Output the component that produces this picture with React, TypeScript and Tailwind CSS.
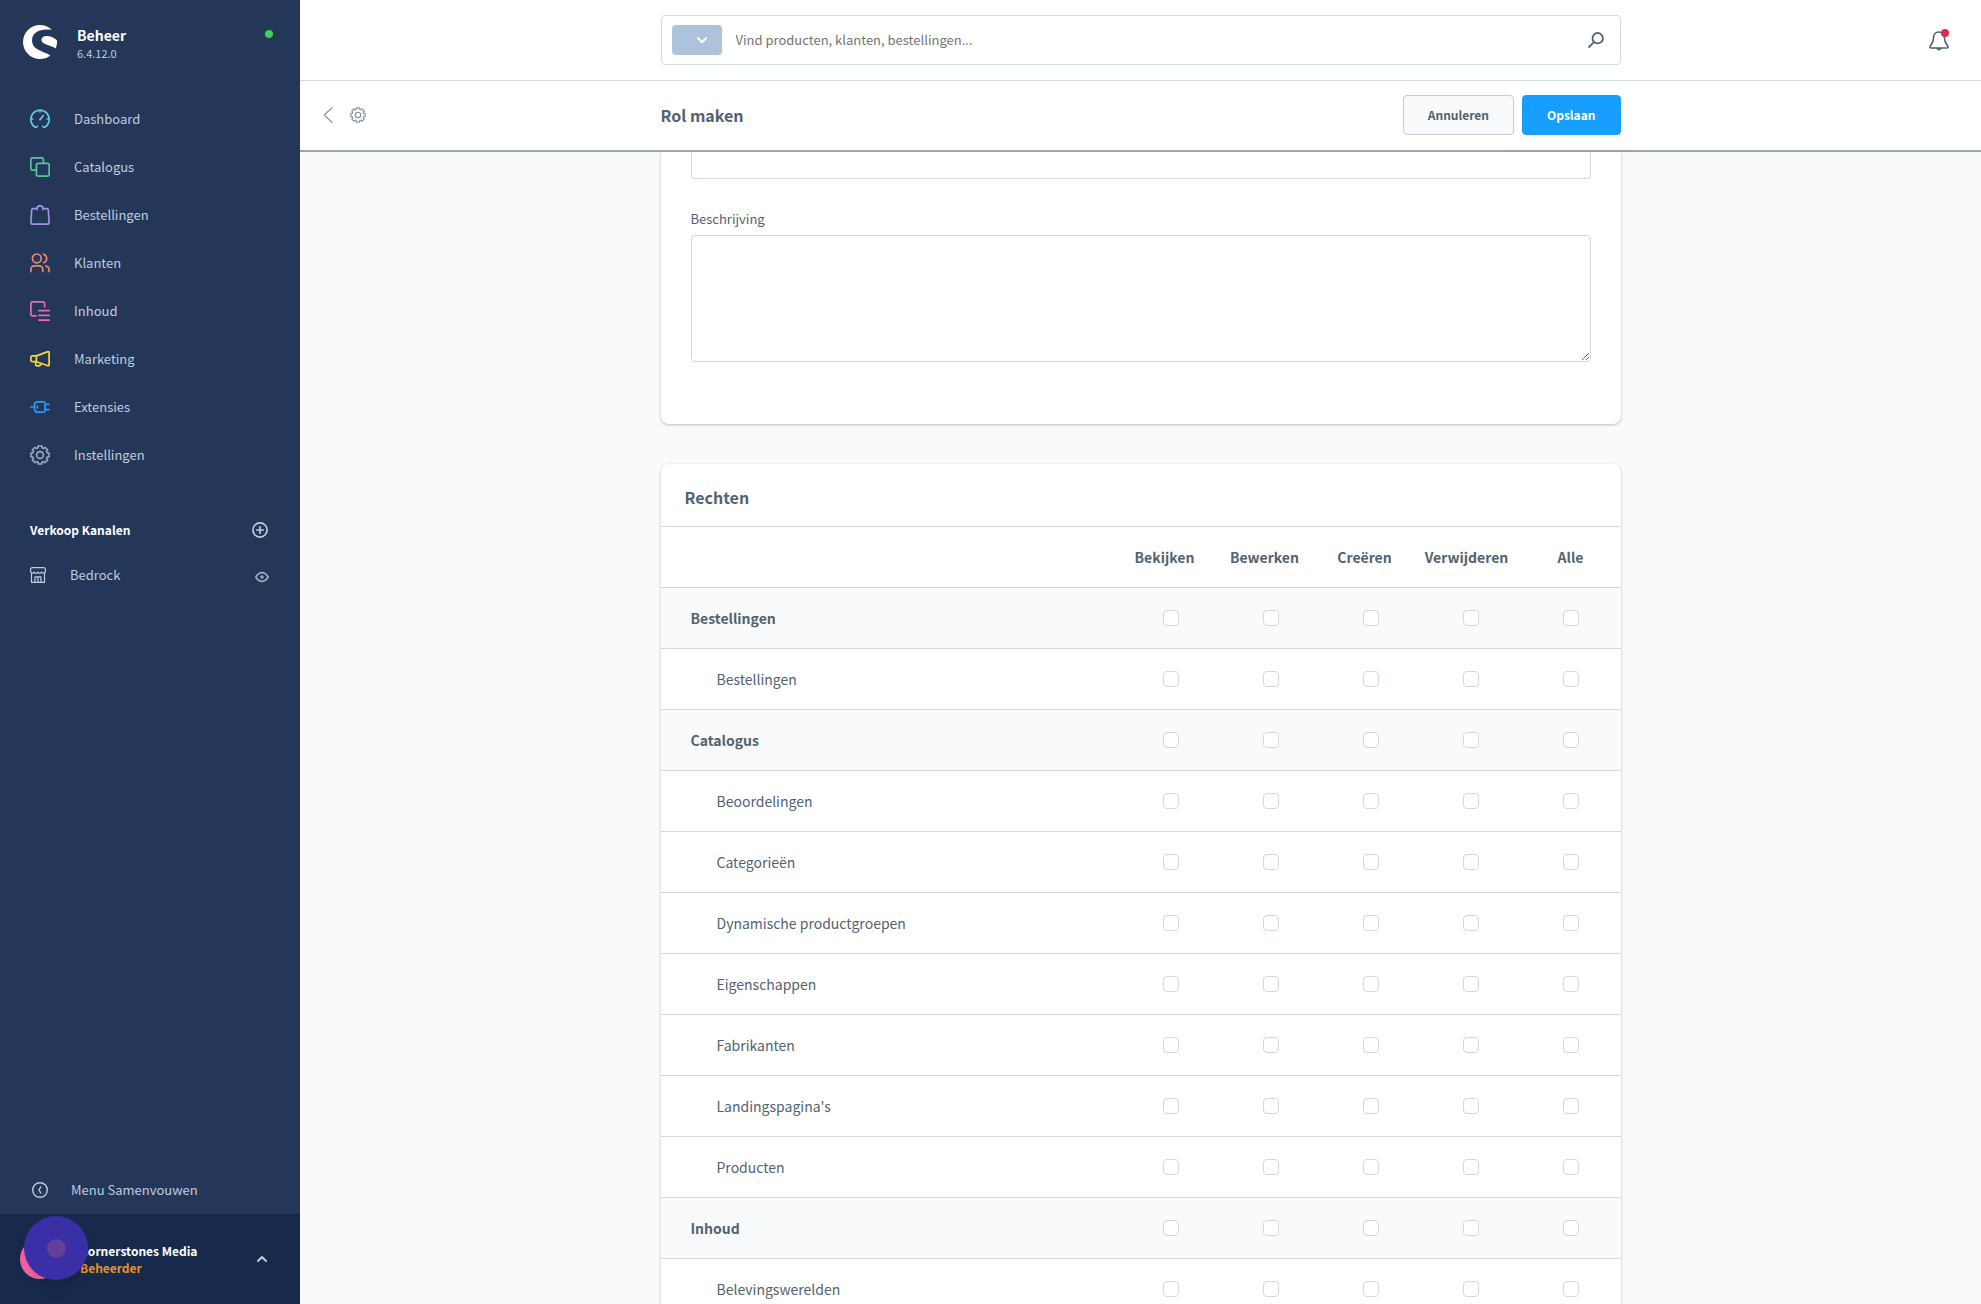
import { useState, type ReactNode } from "react";
import { SiShopware } from "react-icons/si";

// --- Iconos ---
function Svg({ size, box, width = 1.7, children }: { size: number; box: number; width?: number; children: ReactNode }) {
  return (
    <svg
      width={size}
      height={size}
      viewBox={`0 0 ${box} ${box}`}
      fill="none"
      stroke="currentColor"
      strokeWidth={width}
      strokeLinecap="round"
      strokeLinejoin="round"
      className="shrink-0"
      aria-hidden="true"
    >
      {children}
    </svg>
  );
}

const gearPath = () => {
  const points: string[] = [];
  for (let i = 0; i < 8; i++) {
    [[-12, 9.2], [12, 9.2], [15, 7.5], [30, 7.5]].forEach(([deg, r]) => {
      const a = ((i * 45 + deg - 90) * Math.PI) / 180;
      points.push(`${(10 + r * Math.cos(a)).toFixed(2)} ${(10 + r * Math.sin(a)).toFixed(2)}`);
    });
  }
  return `M${points.join("L")}Z`;
};

const Gear = ({ size, width }: { size: number; width: number }) => (
  <Svg size={size} box={20} width={width}>
    <path d={gearPath()} />
    <circle cx="10" cy="10" r="3.4" />
  </Svg>
);

const menu = [
  {
    label: "Dashboard",
    color: "text-[#60c5e6]",
    icon: (
      <Svg size={20} box={20}>
        <path d="M7.2 17.2 6.3 18.2H5.2A9.2 9.2 0 1 1 14.8 18.2H13.7L12.8 17.2M10 1v1.8M1 10h1.8M17.2 10H19M10 10.6l3.300-4" />
      </Svg>
    ),
  },
  {
    label: "Catalogus",
    color: "text-[#57c5a0]",
    icon: (
      <Svg size={20} box={20}>
        <path d="M6.4 13.2H2.6A1.8 1.8 0 0 1 .8 11.4V2.6A1.8 1.8 0 0 1 2.6.8h9A1.8 1.8 0 0 1 13.4 2.6v3.6" />
        <rect x="6.4" y="6.300" width="12.800" height="12.800" rx="1.800" />
      </Svg>
    ),
  },
  {
    label: "Bestellingen",
    color: "text-[#a092e6]",
    icon: (
      <Svg size={20} box={20}>
        <path d="M4.600 3.600H3A1.300 1.300 0 0 0 1.700 4.800L.9 17.600A1.500 1.500 0 0 0 2.400 19.200H17.600A1.500 1.500 0 0 0 19.100 17.600L18.300 4.800A1.300 1.300 0 0 0 17 3.600h-1.600M7 4.600V3.800a3 3 0 0 1 6 0v.8M7 3.600H5.500M13 3.600h1.500" />
      </Svg>
    ),
  },
  {
    label: "Klanten",
    color: "text-[#ee8767]",
    icon: (
      <Svg size={20} box={20}>
        <circle cx="6.800" cy="5.400" r="4.400" />
        <path d="M.9 18.600v-2.200a3.600 3.600 0 0 1 3.600-3.600h4.700a3.600 3.600 0 0 1 3.600 3.600v2.200M13.600 1.200a4.400 4.400 0 0 1 0 8.400M15.700 13a4 4 0 0 1 3.400 3.800v1.800" />
      </Svg>
    ),
  },
  {
    label: "Inhoud",
    color: "text-[#ea6ac0]",
    icon: (
      <Svg size={20} box={20}>
        <path d="M6 14.800H2.700A1.800 1.800 0 0 1 .9 13V2.700A1.800 1.800 0 0 1 2.700.9H12.800A1.800 1.800 0 0 1 14.600 2.700V5.600M9 9.600H19.100M9 14.400H19.100M9 19.100H19.100" />
      </Svg>
    ),
  },
  {
    label: "Marketing",
    color: "text-[#f7d838]",
    icon: (
      <Svg size={20} box={20}>
        <path d="M6.400 6.900H2.300A1.400 1.400 0 0 0 .9 8.300v3a1.400 1.400 0 0 0 1.400 1.400h4.100ZM6.400 6.900 18 2.600A.9.900 0 0 1 19.100 3.400V16a.9.900 0 0 1-1.100.8L6.400 12.700M5.600 12.900v2.200a1.800 1.800 0 0 0 1.800 1.800h1.400a1.800 1.800 0 0 0 1.800-1.800v-.8" />
      </Svg>
    ),
  },
  {
    label: "Extensies",
    color: "text-[#269bf5]",
    icon: (
      <Svg size={20} box={20}>
        <path d="M.9 10H4.600M6.400 4.800H13.400A1.600 1.600 0 0 1 15 6.400V13.600A1.600 1.600 0 0 1 13.400 15.200H6.400L4.600 13.400V6.600ZM15 7.400h4M15 12.600h4M7.400 9.200v1.600" />
      </Svg>
    ),
  },
  { label: "Instellingen", color: "text-[#9aa9c4]", icon: <Gear size={20} width={1.6} /> },
];

// --- Tabla de derechos ---
const columns = [
  { label: "Bekijken", pad: "pr-3" },
  { label: "Bewerken", pad: "pr-3" },
  { label: "Creëren", pad: "pr-3" },
  { label: "Verwijderen", pad: "pr-2" },
  { label: "Alle", pad: "" },
];

const rows = [
  { label: "Bestellingen", group: true },
  { label: "Bestellingen", group: false },
  { label: "Catalogus", group: true },
  { label: "Beoordelingen", group: false },
  { label: "Categorieën", group: false },
  { label: "Dynamische productgroepen", group: false },
  { label: "Eigenschappen", group: false },
  { label: "Fabrikanten", group: false },
  { label: "Landingspagina's", group: false },
  { label: "Producten", group: false },
  { label: "Inhoud", group: true },
  { label: "Belevingswerelden", group: false },
];

function Sidebar() {
  return (
    <aside className="flex w-[300px] shrink-0 flex-col bg-[#243758] text-[#bfcbe0]">
      <div className="flex items-start px-[23px] pt-[25px]">
        <SiShopware className="size-[34px] text-white" aria-hidden="true" />
        <div className="ml-5 flex-1">
          <div className="text-sm leading-5 font-semibold text-white">Beheer</div>
          <div className="text-[11px] leading-4">6.4.12.0</div>
        </div>
        <span className="mt-[5px] mr-1 size-2 rounded-full bg-[#41cf5a]" />
      </div>

      <nav className="mt-[34px]">
        {menu.map(item => (
          <a key={item.label} href="#" className="flex h-12 items-center gap-6 px-[30px] text-[13px]">
            <span className={item.color}>{item.icon}</span>
            {item.label}
          </a>
        ))}
      </nav>

      <div className="mt-[41px] flex items-center justify-between pr-8 pl-[30px]">
        <h2 className="text-xs leading-5 font-semibold text-white">Verkoop Kanalen</h2>
        <button type="button" aria-label="Verkoopkanaal toevoegen">
          <Svg size={16} box={16}>
            <circle cx="8" cy="8" r="7.100" />
            <path d="M8 4.800v6.400M4.800 8h6.400" />
          </Svg>
        </button>
      </div>
      <div className="mt-[25px] flex items-center pr-[31px] pl-[30px]">
        <Svg size={16} box={16} width={1.2}>
          <path d="M1.500 6.500v8.900h13V6.500M5 15.400V9.800h6v5.600M8 9.800v5.600M2.400.6h11.200a1.800 1.800 0 0 1 1.800 1.800v2a1.900 1.900 0 0 1-3.700.5 1.900 1.900 0 0 1-3.700 0 1.900 1.900 0 0 1-3.700 0A1.900 1.900 0 0 1 .6 4.400v-2A1.800 1.800 0 0 1 2.400.6Z" />
        </Svg>
        <a href="#" className="ml-6 flex-1 text-[13px] leading-5">Bedrock</a>
        <button type="button" aria-label="Bekijk Bedrock" className="pt-1 text-[#9aa9c4]">
          <Svg size={14} box={14} width={1.6}>
            <path d="M.8 7C2.600 4 4.600 2.600 7 2.600S11.400 4 13.200 7C11.400 10 9.400 11.400 7 11.400S2.600 10 .8 7Z" />
            <circle cx="7" cy="7" r="1" />
          </Svg>
        </button>
      </div>

      <button type="button" className="mt-auto flex h-12 items-center gap-[23px] px-8 text-[13px]">
        <Svg size={16} box={16} width={1.4}>
          <circle cx="8" cy="8" r="7.300" />
          <path d="M8.800 5 6.900 8l1.900 3" />
        </Svg>
        Menu Samenvouwen
      </button>
      <div className="relative flex h-[90px] items-center bg-[#172a4c] pr-8 pl-5">
        <span className="size-10 rounded-full bg-[#fb62a4]" />
        <div className="ml-5 flex-1 text-xs font-semibold">
          <div className="leading-[17px] text-white">Cornerstones Media</div>
          <div className="leading-[17px] text-[#e8912d]">Beheerder</div>
        </div>
        <button type="button" aria-label="Gebruikersmenu">
          <Svg size={12} box={12} width={2}>
            <path d="M2 8l4-4 4 4" />
          </Svg>
        </button>
        <span className="absolute top-0.5 left-6 flex size-16 items-center justify-center rounded-full bg-[#3a2fa6] shadow-lg">
          <span className="size-[19px] rounded-full bg-[#62409a]" />
        </span>
      </div>
    </aside>
  );
}

export default function App() {
  const [checked, setChecked] = useState<Record<string, boolean>>({});
  const [query, setQuery] = useState("");

  const toggle = (key: string) => setChecked({ ...checked, [key]: !checked[key] });

  return (
    <div className="flex h-screen overflow-hidden bg-[#f9fafc] font-['Noto_Sans_CJK_SC',sans-serif] text-[#52636f]">
      <Sidebar />

      <main className="flex min-w-0 flex-1 flex-col">
        <header className="grid h-[81px] shrink-0 grid-cols-[1fr_minmax(0,960px)_1fr] items-center border-b border-[#d1d9e0] bg-white">
          <div className="col-start-2 flex h-[50px] items-center rounded border border-[#d1d9e0] px-2.5">
            <button
              type="button"
              aria-label="Zoektype"
              className="flex h-[30px] w-[50px] items-center justify-end rounded bg-[#adc3db] pr-3.5 text-white"
            >
              <Svg size={12} box={12} width={2}>
                <path d="M1.800 4l4.200 4.200L10.200 4" />
              </Svg>
            </button>
            <input
              type="text"
              aria-label="Zoeken"
              placeholder="Vind producten, klanten, bestellingen..."
              value={query}
              onChange={e => setQuery(e.target.value)}
              className="min-w-0 flex-1 px-3.5 text-[13px] leading-5 outline-none placeholder:text-[#757575]"
            />
            <button type="button" aria-label="Zoek" className="mr-1.5">
              <Svg size={16} box={16} width={1.8}>
                <circle cx="9.700" cy="6.200" r="5.200" />
                <path d="M6 10.200 1 15" />
              </Svg>
            </button>
          </div>
          <button type="button" aria-label="Meldingen" className="relative mt-0.5 mr-8 justify-self-end">
            <Svg size={20} box={20} width={1.6}>
              <path d="M10 1C6.600 1 4.600 3.400 4.600 6.400c0 4.400-1.400 6-3.200 8.400-.8 1.100-.4 2.200.8 2.200h15.600c1.200 0 1.600-1.100.8-2.200-1.800-2.400-3.200-4-3.200-8.400C15.400 3.400 13.400 1 10 1ZM8.400 17.600a1.700 1.700 0 0 0 3.200 0" />
            </Svg>
            <span className="absolute -top-0.5 right-0 size-2 rounded-full bg-[#de294c]" />
          </button>
        </header>

        <div className="grid h-[71px] shrink-0 grid-cols-[1fr_minmax(0,960px)_1fr] items-center border-b-2 border-[#9aa5b0] bg-white pb-0.5">
          <div className="flex items-center gap-3.5 pl-5 text-[#8c99a8]">
            <button type="button" aria-label="Terug">
              <Svg size={16} box={16} width={1.3}>
                <path d="M12 .8 4.200 8l7.800 7.200" />
              </Svg>
            </button>
            <button type="button" aria-label="Instellingen">
              <Gear size={16} width={1.6} />
            </button>
          </div>
          <div className="flex items-center gap-2 text-xs font-semibold">
            <h1 className="flex-1 text-base">Rol maken</h1>
            <button type="button" className="h-10 rounded border border-[#c3ccd5] bg-[#f9fafc] px-6">
              Annuleren
            </button>
            <button type="button" className="h-10 rounded border border-[#189eff] bg-[#189eff] px-6 text-white">
              Opslaan
            </button>
          </div>
        </div>

        <div className="min-h-0 flex-1 overflow-hidden">
          <div className="mx-auto max-w-[960px]">
            <section className="rounded-b-lg bg-white px-[30px] pb-[62px] shadow-[0_1px_3px_rgba(0,0,0,0.25)]">
              <input
                type="text"
                aria-label="Naam"
                className="block h-[27px] w-full rounded-b border border-t-0 border-[#d1d9e0] px-4 outline-none"
              />
              <label htmlFor="description" className="block pt-[30px] pb-1.5 text-[13px] leading-5">
                Beschrijving
              </label>
              <textarea
                id="description"
                className="block h-[127px] w-full resize-y rounded border border-[#d1d9e0] px-4 py-3 outline-none"
              />
            </section>

            <section className="mt-10 overflow-hidden rounded-t-lg bg-white shadow-[0_1px_3px_rgba(0,0,0,0.25)]">
              <h2 className="flex h-[62px] items-center px-6 pt-1 text-base font-semibold">Rechten</h2>
              <table className="w-full table-fixed border-collapse">
                <thead>
                  <tr className="h-[61px] border-y border-[#d1d9e0]">
                    <td />
                    {columns.map(col => (
                      <th key={col.label} scope="col" className={`w-[100px] text-sm font-semibold ${col.pad}`}>
                        {col.label}
                      </th>
                    ))}
                  </tr>
                </thead>
                <tbody>
                  {rows.map((row, index) => (
                    <tr key={index} className={`h-[61px] border-b border-[#d1d9e0] ${row.group ? "bg-[#f9fafc]" : ""}`}>
                      <th
                        scope="row"
                        className={`text-left text-sm ${row.group ? "pl-[30px] font-semibold" : "pl-14 font-normal"}`}
                      >
                        {row.label}
                      </th>
                      {columns.map(col => (
                        <td key={col.label}>
                          <input
                            type="checkbox"
                            aria-label={`${row.label} ${col.label}`}
                            checked={!!checked[`${index}-${col.label}`]}
                            onChange={() => toggle(`${index}-${col.label}`)}
                            className="mx-auto block size-4 appearance-none rounded border border-[#d1d9e0] bg-white checked:bg-[#189eff]"
                          />
                        </td>
                      ))}
                    </tr>
                  ))}
                </tbody>
              </table>
            </section>
          </div>
        </div>
      </main>
    </div>
  );
}
